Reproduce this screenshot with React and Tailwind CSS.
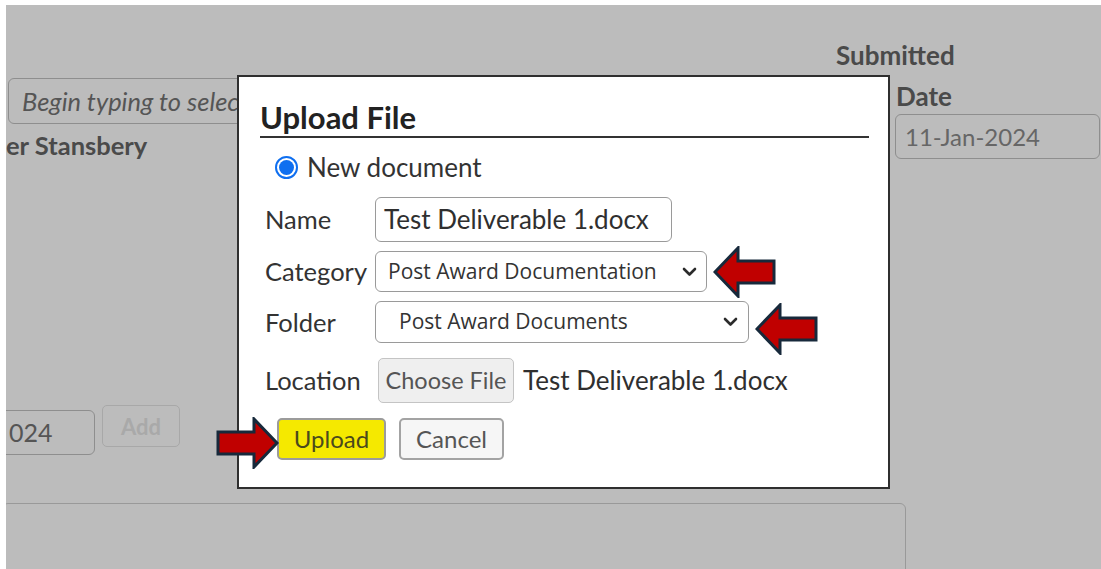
import React from 'react';

const Chevron = () => (
  <svg width="15" height="10" viewBox="0 0 15 10" fill="none">
    <path d="M2 2l5.5 5.5L13 2" stroke="#2b2b2b" strokeWidth="2.6" strokeLinecap="round" strokeLinejoin="round" />
  </svg>
);

// red callout arrow, drawn pointing left unless flipped
const Pointer = ({ className, flip }) => (
  <svg
    className={`absolute ${className}`}
    width="64"
    height="52"
    viewBox="0 0 64 52"
    style={flip ? { transform: 'scaleX(-1)' } : undefined}
  >
    <polygon
      points="2,26 25,2 25,15 61,15 61,37 25,37 25,50"
      fill="#c00000"
      stroke="#17293b"
      strokeWidth="3"
      strokeLinejoin="miter"
    />
  </svg>
);

const UploadModal = () => (
  <div className="absolute left-[237px] top-[75px] w-[653px] h-[414px] bg-white border-2 border-[#2f2f2f] pt-[23px] pl-[21px] pr-[19px] font-['Lato',sans-serif] text-[#333]">
    <h2 className="text-[31px] font-bold leading-[34px] pb-[2px] border-b-2 border-[#333] text-[#222]">
      Upload File
    </h2>

    <div className="pl-[5px]">
      <div className="flex items-center h-[30px] mt-[14px] pl-[10px]">
        <span className="w-[23px] h-[23px] rounded-full border-2 border-[#0f6ff0] p-[2px] bg-white">
          <span className="block w-full h-full rounded-full bg-[#0f6ff0]" />
        </span>
        <span className="ml-[9px] text-[26px] leading-[30px]">New document</span>
      </div>

      <div className="flex items-center mt-[15px]">
        <label className="w-[110px] text-[25.5px]">Name</label>
        <div className="w-[297px] h-[45px] border border-[#9a9a9a] rounded-[6px] pl-[8px] flex items-center text-[26px] text-[#2f2f2f]">
          Test Deliverable 1.docx
        </div>
      </div>

      <div className="flex items-center mt-[9px]">
        <label className="w-[110px] text-[25.5px]">Category</label>
        <div className="w-[332px] h-[41px] border border-[#9a9a9a] rounded-[6px] pl-[12px] pr-[9px] flex items-center justify-between font-['Open_Sans',sans-serif] text-[21px] text-[#333]">
          <span>Post Award Documentation</span>
          <Chevron />
        </div>
      </div>

      <div className="flex items-center mt-[9px]">
        <label className="w-[110px] text-[25.5px]">Folder</label>
        <div className="w-[374px] h-[42px] border border-[#9a9a9a] rounded-[6px] pl-[23px] pr-[10px] flex items-center justify-between font-['Open_Sans',sans-serif] text-[21px] text-[#333]">
          <span>Post Award Documents</span>
          <Chevron />
        </div>
      </div>

      <div className="flex items-center mt-[15px]">
        <label className="w-[113px] text-[25.5px]">Location</label>
        <button className="w-[136px] h-[45px] rounded-[5px] bg-[#efefef] border border-[#c4c4c4] text-[23.5px] text-[#555]">
          Choose File
        </button>
        <span className="ml-[9px] text-[26px] text-[#2f2f2f]">Test Deliverable 1.docx</span>
      </div>

      <div className="flex items-center mt-[15px] ml-[12px] gap-[13px]">
        <button className="w-[109px] h-[42px] rounded-[5px] bg-[#f5e900] border-2 border-[#9b9b9b] text-[24px] text-[#4a4a1c]">
          Upload
        </button>
        <button className="w-[105px] h-[42px] rounded-[5px] bg-[#f6f6f6] border-2 border-[#a3a3a3] text-[24px] text-[#555]">
          Cancel
        </button>
      </div>
    </div>
  </div>
);

export default function App() {
  return (
    <div className="relative w-[1101px] h-[569px] bg-white pt-[5px] pl-[6px] overflow-hidden font-['Lato',sans-serif]">
      <div className="h-[564px] bg-[#bcbcbc] overflow-hidden text-[#4a4a4a]">
        <div className="flex justify-between">
          <div className="w-[300px]">
            <div className="mt-[73px] ml-[2px] h-[46px] w-[300px] rounded-[6px] border border-[#8e8e8e] pl-[13px] flex items-center text-[25.5px] italic text-[#555] whitespace-nowrap">
              Begin typing to select...
            </div>
            <div className="mt-[6px] text-[25.5px] font-bold leading-[30px] whitespace-nowrap">
              er Stansbery
            </div>
          </div>
          <div className="w-[265px]">
            <div className="mt-[35px] text-[26px] font-bold leading-[30px]">Submitted</div>
            <div className="mt-[11px] ml-[60px] text-[26px] font-bold leading-[30px]">Date</div>
            <div className="mt-[3px] ml-[59px] w-[205px] h-[45px] rounded-[6px] border border-[#8e8e8e] pl-[9px] flex items-center text-[24px] text-[#666]">
              11-Jan-2024
            </div>
          </div>
        </div>

        <div className="flex items-start mt-[245px]">
          <div className="mt-[5px] -ml-[10px] w-[99px] h-[45px] rounded-[6px] border border-[#8e8e8e] pl-[12px] flex items-center text-[25px] text-[#555]">
            024
          </div>
          <button className="ml-[7px] w-[78px] h-[42px] rounded-[5px] border border-[#a8a8a8] text-[22px] font-bold text-[#a9a9a9]">
            Add
          </button>
        </div>

        <div className="mt-[48px] -ml-[4px] w-[904px] h-[100px] rounded-[6px] border border-[#999]" />
      </div>

      <UploadModal />

      <Pointer className="left-[713px] top-[246px]" />
      <Pointer className="left-[755px] top-[303px]" />
      <Pointer className="left-[215px] top-[417px]" flip />
    </div>
  );
}
